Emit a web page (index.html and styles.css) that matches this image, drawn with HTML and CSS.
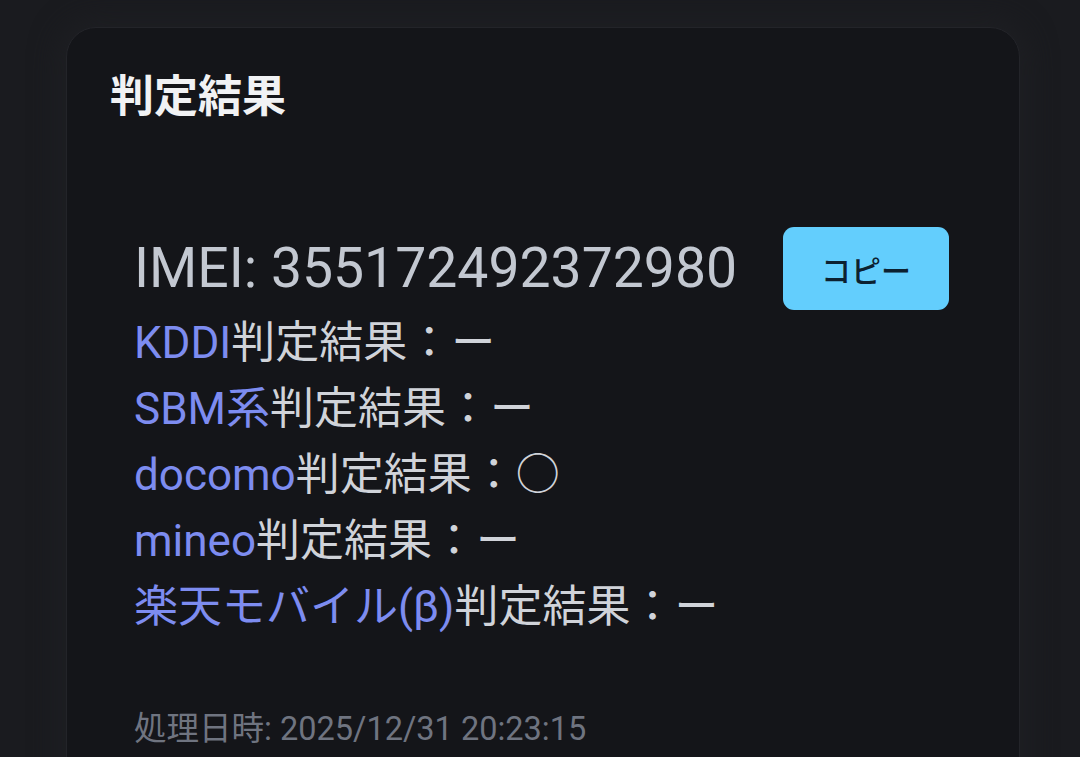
FILE: index.html
```html
<!DOCTYPE html>
<html lang="ja">
<head>
<meta charset="utf-8">
<title>判定結果</title>
<link rel="stylesheet" href="styles.css">
</head>
<body>
<div class="page">
  <section class="card">
    <h1 class="title">判定結果</h1>
    <div class="result">
      <div class="imei-row">
        <span class="imei">IMEI: 355172492372980</span>
        <button class="copy" type="button">コピー</button>
      </div>
      <ul class="lines">
        <li><span class="carrier">KDDI</span>判定結果：ー</li>
        <li><span class="carrier">SBM系</span>判定結果：ー</li>
        <li><span class="carrier">docomo</span>判定結果：○</li>
        <li><span class="carrier">mineo</span>判定結果：ー</li>
        <li><span class="carrier">楽天モバイル(β)</span>判定結果：ー</li>
      </ul>
      <p class="timestamp">処理日時: 2025/12/31 20:23:15</p>
    </div>
  </section>
</div>
</body>
</html>
```

FILE: styles.css
```css
html, body {
  margin: 0;
  padding: 0;
}
body {
  background: #1a1b1f;
  font-family: "Roboto", "Noto Sans CJK JP", sans-serif;
  width: 1080px;
  height: 757px;
  overflow: hidden;
}
.page {
  padding: 27px 60px 0 66px;
}
.card {
  background: #141519;
  border: 1px solid #232429;
  border-radius: 30px;
  box-shadow: 0 0 28px 8px #1e1f23;
  padding: 39px 44px 40px 43px;
  min-height: 900px;
  box-sizing: border-box;
}
.title {
  margin: 0;
  font-family: "Noto Sans CJK JP", sans-serif;
  font-weight: 700;
  font-size: 44px;
  line-height: 53px;
  color: #f1f2f4;
}
.result {
  padding: 107px 24px 0 24px;
}
.imei-row {
  display: flex;
  align-items: center;
  gap: 46px;
  height: 83px;
}
.imei {
  font-size: 55.3px;
  color: #c3c8d1;
  line-height: 1;
  white-space: nowrap;
  flex: none;
}
.copy {
  flex: none;
  background: #63cefd;
  color: #0c2130;
  border: none;
  border-radius: 11px;
  font-family: "Noto Sans CJK JP", sans-serif;
  font-weight: 500;
  font-size: 30px;
  line-height: 44px;
  padding: 0;
  height: 83px;
  width: 166px;
}
.lines {
  list-style: none;
  margin: 0;
  padding: 0;
}
.lines li {
  font-size: 44px;
  line-height: 66px;
  color: #d0d3d9;
  white-space: nowrap;
}
.carrier {
  color: #7d8cf0;
}
.timestamp {
  margin: 65px 0 0;
  font-size: 32.5px;
  line-height: 48px;
  color: #6f7480;
  white-space: nowrap;
}
```
